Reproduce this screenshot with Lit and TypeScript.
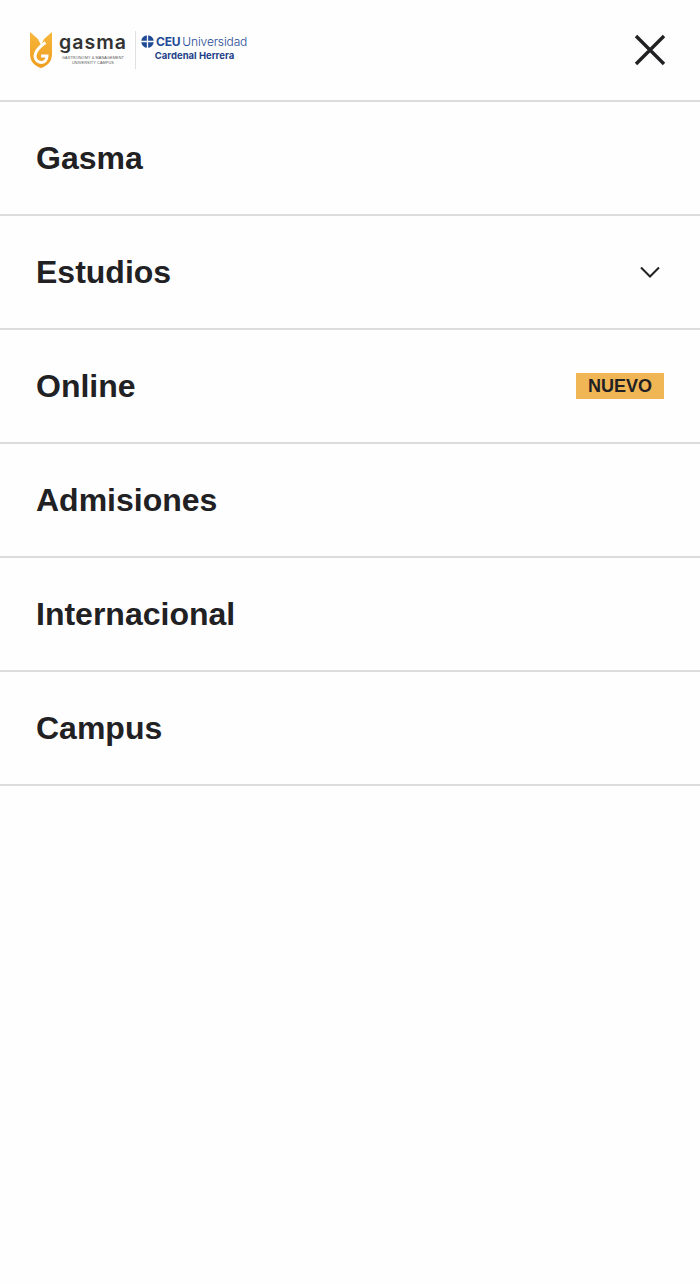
import { LitElement, html, css, svg } from "lit";
import { customElement } from "lit/decorators.js";

const items = ["Gasma", "Estudios", "Online", "Admisiones", "Internacional", "Campus"];

@customElement("app-root")
export class AppRoot extends LitElement {
  static styles = css`
    :host { display: block; min-height: 1284px; background: #fefefe; color: #212124; font-family: "Liberation Sans", Arial, sans-serif; }
    header { height: 100px; box-sizing: border-box; display: flex; align-items: center; justify-content: space-between; padding: 0 34px 0 30px; }
    .logo { display: flex; align-items: center; height: 40px; }
    .mark { width: 22px; height: 36px; display: block; }
    .gasma { margin-left: 7px; width: 68px; display: flex; flex-direction: column; align-items: center; color: #333; }
    .word { font-family: "Inter", sans-serif; font-weight: 600; font-size: 19.5px; letter-spacing: 1px; line-height: 16px; white-space: nowrap; }
    .sub { font-size: 3.8px; line-height: 4.6px; letter-spacing: 0.12px; color: #555; white-space: nowrap; text-align: center; margin-top: 6px; }
    .divider { width: 1px; height: 38px; background: #e0e0e0; margin: 0 5px 0 8px; }
    .ceu { width: 107px; color: #1f4a96; margin-bottom: 4px; }
    .ceu-top { display: flex; align-items: center; gap: 2px; font-family: "Inter", sans-serif; font-size: 12px; line-height: 14px; white-space: nowrap; }
    .ceu-top b { font-weight: 700; letter-spacing: -0.2px; }
    .ceu-top span { font-weight: 300; letter-spacing: -0.15px; }
    .ceu-bot { font-family: "Inter", sans-serif; font-weight: 700; font-size: 9.5px; line-height: 12px; color: #1d4189; text-align: center; white-space: nowrap; margin-top: 1px; }
    .close { width: 32px; height: 32px; display: block; }
    ul { list-style: none; margin: 0; padding: 0; border-top: 2px solid #dcdcdc; }
    li { height: 112px; border-bottom: 2px solid #dcdcdc; display: flex; align-items: center; justify-content: space-between; padding: 0 36px; font-size: 32px; font-weight: 700; }
    .chev { width: 20px; height: 12px; display: block; margin-right: 4px; }
    .badge { background: #f0b655; font-size: 18px; line-height: 26px; height: 26px; padding: 0 12px; }
  `;

  private trailing(name: string) {
    if (name === "Estudios")
      return html`<svg class="chev" viewBox="0 0 20 12" fill="none" stroke="#212124" stroke-width="2"><path d="M1 1.5l9 9 9-9" /></svg>`;
    if (name === "Online") return html`<span class="badge">NUEVO</span>`;
    return "";
  }

  render() {
    return html`
      <header>
        <div class="logo">
          <svg class="mark" viewBox="0 0 22 36">
            <defs>
              <linearGradient id="g" x1="0" y1="0" x2="0" y2="1">
                <stop offset="0" stop-color="#f6b73c" />
                <stop offset="1" stop-color="#ef9d1e" />
              </linearGradient>
            </defs>
            <path fill="url(#g)" d="M0 0l8 7 3 6 3-6 8-7v22c0 8-5 12-11 14C5 34 0 30 0 22z" />
            <path fill="none" stroke="#fefefe" stroke-width="3" d="M15.5 10.5C10.5 14 5 18.5 5 24c0 3.6 2.7 6.5 6 6.5 3.6 0 6-2.8 6-6.5h-6" />
          </svg>
          <div class="gasma">
            <div class="word">gasma</div>
            <div class="sub">GASTRONOMY &amp; MANAGEMENT<br />UNIVERSITY CAMPUS</div>
          </div>
          <div class="divider"></div>
          <div class="ceu">
            <div class="ceu-top">
              <svg width="13" height="13" viewBox="0 0 13 13">
                <circle cx="6.5" cy="6.5" r="6.3" fill="#1f4a96" />
                ${svg`<path d="M6.5 0v13M0 6.5h13" stroke="#fefefe" stroke-width="1.3" />`}
              </svg>
              <b>CEU</b><span>Universidad</span>
            </div>
            <div class="ceu-bot">Cardenal Herrera</div>
          </div>
        </div>
        <svg class="close" viewBox="0 0 32 32" fill="none" stroke="#212124" stroke-width="3.4"><path d="M2 2l28 28M30 2L2 30" /></svg>
      </header>
      <ul>
        ${items.map((n) => html`<li><span>${n}</span>${this.trailing(n)}</li>`)}
      </ul>
    `;
  }
}
